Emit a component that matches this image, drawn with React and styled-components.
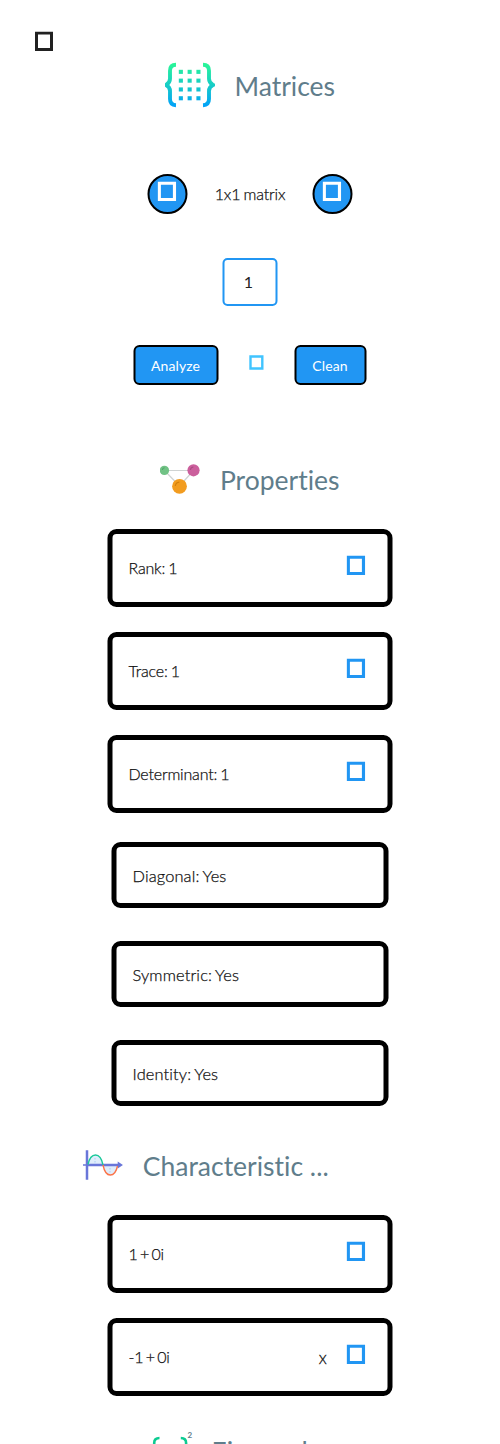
import React from 'react';
import styled, { createGlobalStyle, css } from 'styled-components';

const GlobalStyle = createGlobalStyle`
  *, *::before, *::after { box-sizing: border-box; }
  body { margin: 0; background: #fff; overflow: hidden; }
`;

const Page = styled.main`
  height: 1444px;
  overflow: hidden;
  display: flex;
  flex-direction: column;
  align-items: center;
  font-family: Lato, 'Liberation Sans', sans-serif;
  font-variant-ligatures: none;
  color: #111;
`;

const lightText = css`
  font-weight: 300;
  -webkit-text-stroke: 0.25px currentColor;
`;

const TopBar = styled.header`
  align-self: stretch;
  height: 61px;
  padding: 31px 0 0 35px;
  flex: none;
`;

const Glyph = styled.svg`
  display: block;
  flex: none;
  color: ${(p) => p.$color};
`;

const Heading = styled.div`
  display: flex;
  align-items: center;
  gap: 20px;
  height: 50px;
  margin-top: ${(p) => p.$top || 0}px;
  flex: none;
`;

const Title = styled.h2`
  margin: 0 0 0 -0.5px;
  padding-top: ${(p) => (p.$low ? 2 : 0)}px;
  width: ${(p) => (p.$width ? `${p.$width}px` : 'auto')};
  font-size: 26.5px;
  line-height: 34px;
  font-weight: 400;
  color: #607d8b;
  white-space: nowrap;
`;

const SizeRow = styled.div`
  display: flex;
  align-items: center;
  justify-content: space-between;
  width: 205px;
  height: 40px;
  margin-top: 63px;
  flex: none;
`;

const RoundButton = styled.button`
  display: flex;
  justify-content: center;
  align-items: flex-start;
  width: 40px;
  height: 40px;
  padding: 5px 0 0 0.5px;
  border: 2px solid #000;
  border-radius: 50%;
  background: #2196f3;
  transform: translateX(-0.5px);
`;

const SizeLabel = styled.span`
  ${lightText}
  font-size: 16px;
  line-height: 20px;
  letter-spacing: -0.15px;
  word-spacing: -1px;
`;

const Cell = styled.input`
  width: 55px;
  height: 48px;
  margin-top: 44px;
  padding: 0 2px 2px 0;
  border: 2px solid #2196f3;
  border-radius: 5px;
  text-align: center;
  font: 400 16px Lato, sans-serif;
  color: #212121;
  background: #fff;
  transform: translateX(-0.5px);
  flex: none;
`;

const Actions = styled.div`
  display: flex;
  justify-content: space-between;
  width: 233px;
  height: 40px;
  margin-top: 39px;
  flex: none;
`;

const ActionButton = styled.button`
  width: ${(p) => p.$width}px;
  height: 40px;
  padding: 0;
  border: 2px solid #000;
  border-radius: 6px;
  background: #2196f3;
  color: #fff;
  font: 400 14px Lato, sans-serif;
  letter-spacing: 0.1px;
  transform: translateX(-0.5px);
`;

const Swap = styled.span`
  padding: 10px 0 0 0;
`;

const List = styled.div`
  display: flex;
  flex-direction: column;
  align-items: center;
  gap: ${(p) => p.$gap}px;
  margin-top: ${(p) => p.$top}px;
  flex: none;
`;

const Card = styled.section`
  ${lightText}
  display: flex;
  align-items: center;
  width: ${(p) => (p.$compact ? 277 : 285)}px;
  height: ${(p) => (p.$compact ? 66 : 78)}px;
  padding: ${(p) => (p.$compact ? '2px 16px 0 16.5px' : '0 22px 0 16.5px')};
  border: 5px solid #000;
  border-radius: 9px;
  font-size: ${(p) => (p.$compact ? 16.4 : 16)}px;
  line-height: 20px;
  letter-spacing: ${(p) => (p.$compact ? 0.14 : -0.18)}px;
  word-spacing: ${(p) => (p.$tight ? -1.8 : -1)}px;
  transform: translateX(-0.5px);
`;

const CardText = styled.span`
  flex: 1;
`;

const Power = styled.span`
  margin: 2px 19.5px 0 0;
  font-size: 17px;
  -webkit-text-stroke-width: 0.3px;
`;

const CardIcon = styled.span`
  margin-bottom: 6px;
`;

function Box({ color, small, wide }) {
  if (small) {
    return (
      <Glyph $color={color} width="15" height="15" viewBox="0 0 15 15">
        <path fill="currentColor" fillRule="evenodd" d="M.3.2h14.2v14.6H.3zM2.7 2.7v9.5h9.4V2.7z" />
      </Glyph>
    );
  }
  return (
    <Glyph $color={color} width="19" height="20" viewBox="0 0 19 20">
      <path
        fill="currentColor"
        fillRule="evenodd"
        d={wide ? 'M.2.7h18.4V20H.2zM3.4 3.7V17h12V3.7z' : 'M0 .8h18V20H0zM3 3.5V17h12V3.5z'}
      />
    </Glyph>
  );
}

function MatrixLogo() {
  return (
    <svg width="50" height="50" viewBox="0 0 50 50">
      <defs>
        <linearGradient id="mint" x1="0" y1="3" x2="0" y2="47" gradientUnits="userSpaceOnUse">
          <stop offset="0" stopColor="#2af598" />
          <stop offset=".5" stopColor="#16cbc8" />
          <stop offset="1" stopColor="#009efd" />
        </linearGradient>
      </defs>
      <g fill="none" stroke="url(#mint)" strokeWidth="3.9">
        <path d="M11 3.8q-6 0-6 6v8q0 4-4 6.2q4 2 4 6v8q0 6 6 6.2" />
        <path d="M38 3.8q6 0 6 6v8q0 4 4 6.2q-4 2-4 6v8q0 6-6 6.2" />
      </g>
      <g fill="url(#mint)">
        {[8.8, 17.6, 26.4, 35.2].map((y) =>
          [13.8, 22.6, 31.4].map((x) => <rect key={`${x}-${y}`} x={x} y={y} width="4.1" height="4.1" />)
        )}
      </g>
    </svg>
  );
}

function GraphLogo() {
  return (
    <svg width="40" height="40" viewBox="0 0 40 40">
      <path d="M4.5 10.5h29L19.5 26z" fill="none" stroke="#cfd3d3" strokeWidth="1.2" />
      <circle cx="4.4" cy="10.4" r="4.7" fill="#71c285" />
      <circle cx="33.5" cy="10.3" r="6.1" fill="#cb5f9c" />
      <circle cx="19.5" cy="26.3" r="7.4" fill="#f29c1f" />
      <g fill="none" strokeWidth="1.1">
        <path d="M2.3 10q.3-2 2.3-2.2" stroke="#4fa668" />
        <path d="M30.4 9.9q.3-2.6 3-2.9" stroke="#a84b80" />
        <path d="M15.3 26q.4-3.5 4-3.9" stroke="#d17f0b" />
      </g>
    </svg>
  );
}

function WaveLogo() {
  return (
    <svg width="40" height="40" viewBox="0 0 40 40">
      <path d="M5 20Q7 10 12.5 10T20 20q2 10 7.5 10T35 20z" fill="#e0edfb" />
      <path d="M4 20h32M4 5.2v29.6" stroke="#6976d9" strokeWidth="2.5" fill="none" />
      <path d="M0 20h5M35.5 18v4l3-2z" stroke="#6976d9" strokeWidth="1.6" fill="#6976d9" />
      <path d="M5 19.5Q7 10 12.5 10T20 20" fill="none" stroke="#1bc99a" strokeWidth="1.4" />
      <path d="M20 20q2 10 7.3 10T34.5 21" fill="none" stroke="#fb7449" strokeWidth="1.4" />
      <path d="M12 13v1.5m0 1.5v1.5M27 23v1.5m0 1.5v1.5" stroke="#b4d3f5" strokeWidth="1.2" />
    </svg>
  );
}

function EigenLogo() {
  return (
    <svg width="40" height="40" viewBox="0 0 40 40" overflow="visible">
      <g fill="none" stroke="#0dcb91" strokeWidth="2.6">
        <path d="M7.5 7q-5.3 0-5.3 5v6q0 3-2 4q2 1 2 4v6q0 5 5 5" />
        <path d="M28.8 7q5.3 0 5.3 5v6q0 3 2 4q-2 1-2 4v6q0 5-5 5" />
      </g>
      <text x="35.5" y="6.5" fontFamily="Lato, sans-serif" fontSize="8" fontWeight="700" fill="#607d8b">2</text>
    </svg>
  );
}

function ValueCard({ children, power, tight }) {
  return (
    <Card $tight={tight}>
      <CardText>{children}</CardText>
      {power && <Power>{power}</Power>}
      <CardIcon><Box wide color="#2196f3" /></CardIcon>
    </Card>
  );
}

export default function App() {
  return (
    <>
      <GlobalStyle />
      <Page>
        <TopBar><Box color="#212121" /></TopBar>
        <Heading><MatrixLogo /><Title>Matrices</Title></Heading>
        <SizeRow>
          <RoundButton><Box wide color="#fff" /></RoundButton>
          <SizeLabel>1x1 matrix</SizeLabel>
          <RoundButton><Box wide color="#fff" /></RoundButton>
        </SizeRow>
        <Cell defaultValue="1" />
        <Actions>
          <ActionButton $width={85}>Analyze</ActionButton>
          <Swap><Box small color="#40c4ff" /></Swap>
          <ActionButton $width={72}>Clean</ActionButton>
        </Actions>
        <Heading $top={70}><GraphLogo /><Title>Properties</Title></Heading>
        <List $gap={25} $top={24}>
          <ValueCard>Rank: 1</ValueCard>
          <ValueCard>Trace: 1</ValueCard>
          <ValueCard>Determinant: 1</ValueCard>
        </List>
        <List $gap={33} $top={29}>
          <Card $compact>Diagonal: Yes</Card>
          <Card $compact>Symmetric: Yes</Card>
          <Card $compact>Identity: Yes</Card>
        </List>
        <Heading $top={34}><WaveLogo /><Title $low $width={274}>Characteristic ...</Title></Heading>
        <List $gap={25} $top={25}>
          <ValueCard tight>1 + 0i</ValueCard>
          <ValueCard tight power="x">-1 + 0i</ValueCard>
        </List>
        <Heading $top={30}><EigenLogo /><Title>Eigenvalues</Title></Heading>
      </Page>
    </>
  );
}
